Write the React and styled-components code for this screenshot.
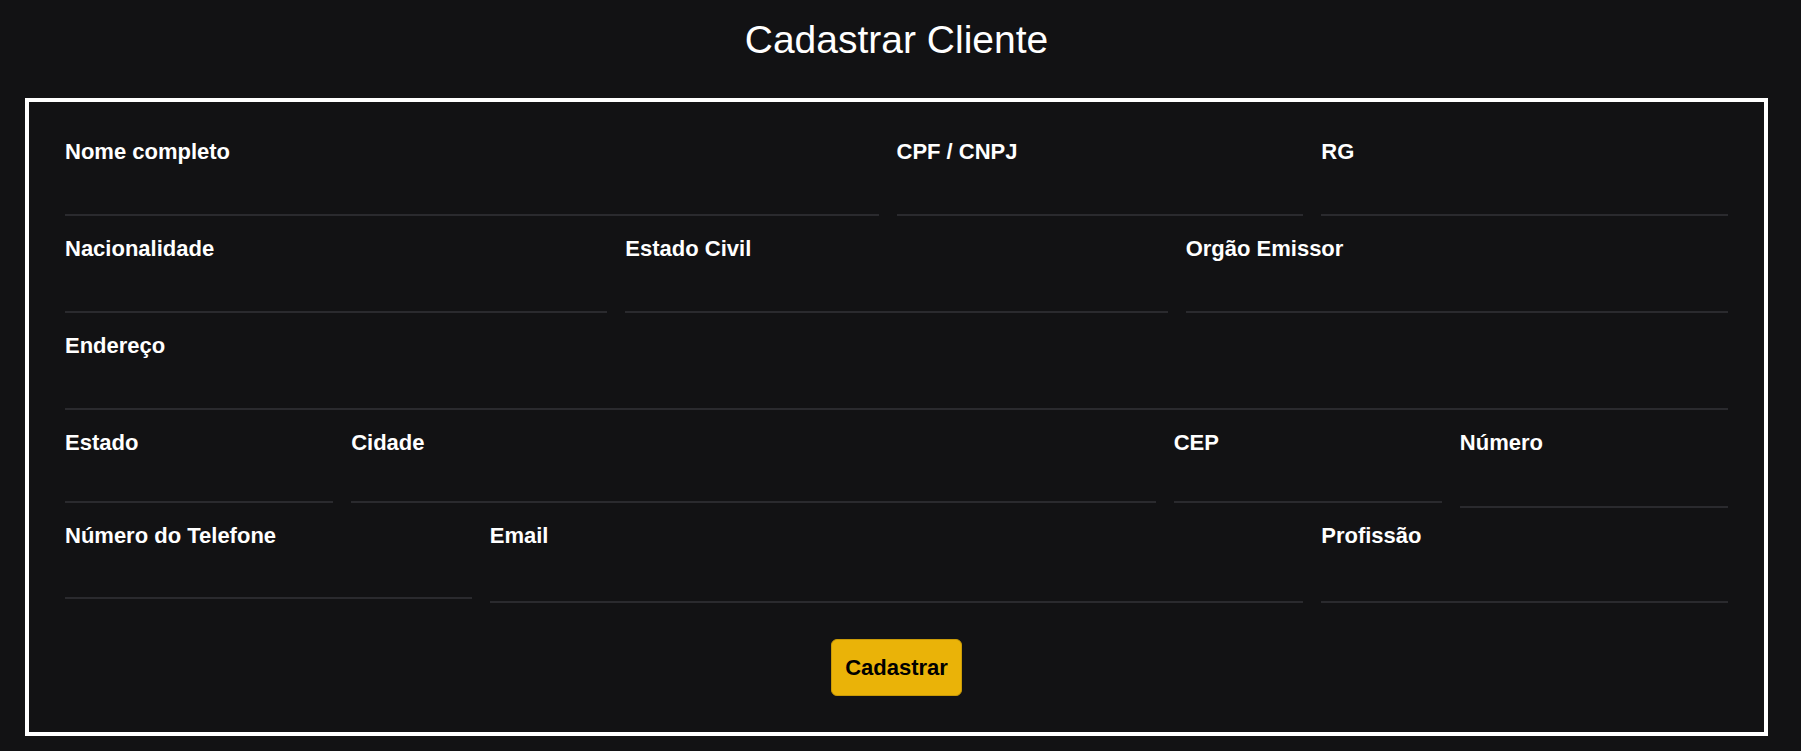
import React from 'react'
import styled, { createGlobalStyle } from 'styled-components'

const GlobalStyle = createGlobalStyle`
    * { box-sizing: border-box; }
    html, body {
        margin: 0;
        padding: 0;
        background: #121214;
        font-family: "Liberation Sans", Arial, sans-serif;
    }
`;

const Page = styled.div`
    padding: 17px 33px 15px 25px;
    color: #fff;
`;

const Title = styled.h1`
    margin: 0 0 36px;
    text-align: center;
    font-size: 39px;
    font-weight: 400;
    line-height: 45px;
`;

const FormBox = styled.form`
    border: 4px solid #fff;
    padding: 37px 36px 36px;
`;

const Row = styled.div`
    display: flex;
    align-items: flex-start;
    gap: 18px;
    margin-bottom: 20px;
`;

const Field = styled.div`
    display: flex;
    flex-direction: column;
    flex: ${p => p.$grow || 1} 1 0;
    min-width: 0;
`;

const Label = styled.label`
    font-size: 22px;
    font-weight: 700;
    line-height: 25px;
    color: #fff;
`;

const Input = styled.input`
    height: ${p => p.$h || 52}px;
    margin-bottom: ${p => (p.$over ? -p.$over : 0)}px;
    background: transparent;
    border: none;
    border-bottom: 2px solid #2a2a2e;
    outline: none;
    color: #fff;
    font-family: inherit;
    font-size: 18px;
    padding: 0;
`;

const Actions = styled.div`
    display: flex;
    justify-content: center;
    padding-top: 16px;
`;

const Button = styled.button`
    background: #eab308;
    color: #000;
    border: 1px solid #c99a07;
    border-radius: 6px;
    font-family: inherit;
    font-size: 22px;
    font-weight: 700;
    line-height: 25px;
    padding: 15px 13px;
    cursor: pointer;
`;

function TextField({ label, grow, h, over, type = 'text' }) {
    return (
        <Field $grow={grow}>
            <Label>{label}</Label>
            <Input type={type} $h={h} $over={over} />
        </Field>
    );
}

export default function App() {
    return (
        <>
            <GlobalStyle />
            <Page>
                <Title>Cadastrar Cliente</Title>
                <FormBox onSubmit={e => e.preventDefault()}>
                    <Row>
                        <TextField label="Nome completo" grow={2} />
                        <TextField label="CPF / CNPJ" />
                        <TextField label="RG" />
                    </Row>
                    <Row>
                        <TextField label="Nacionalidade" />
                        <TextField label="Estado Civil" />
                        <TextField label="Orgão Emissor" />
                    </Row>
                    <Row>
                        <TextField label="Endereço" />
                    </Row>
                    <Row>
                        <TextField label="Estado" h={48} />
                        <TextField label="Cidade" grow={3} h={48} />
                        <TextField label="CEP" h={48} />
                        <TextField label="Número" type="number" h={53} over={5} />
                    </Row>
                    <Row>
                        <TextField label="Número do Telefone" h={51} />
                        <TextField label="Email" grow={2} h={55} />
                        <TextField label="Profissão" h={55} />
                    </Row>
                    <Actions>
                        <Button type="submit">Cadastrar</Button>
                    </Actions>
                </FormBox>
            </Page>
        </>
    );
}
